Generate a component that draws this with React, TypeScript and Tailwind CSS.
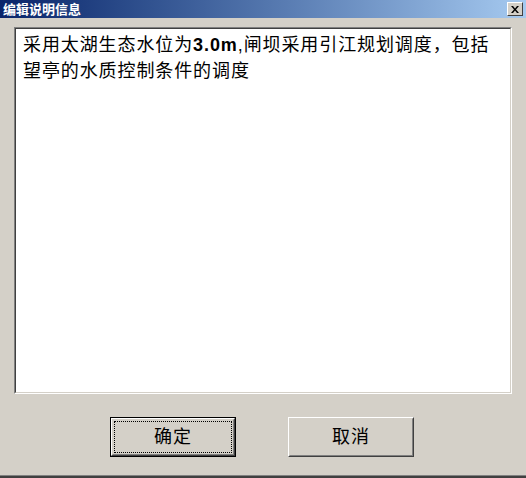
import React from 'react';

const cjk = { fontFamily: '"Liberation Sans", "Noto Sans CJK SC", sans-serif' };

const CloseButton: React.FC = () => (
  <div className="w-[16px] h-[14px] bg-[#d4d0c8] border border-t-white border-l-white border-r-[#404040] border-b-[#404040] flex items-center justify-center">
    <svg width="8" height="7" viewBox="0 0 8 7">
      <path d="M0 0h2l2 2.5L6 0h2L5 3.5 8 7H6L4 4.5 2 7H0l3-3.5z" fill="#000" />
    </svg>
  </div>
);

export default function App() {
  return (
    <div className="w-[526px] h-[478px] bg-[#d4d0c8] flex flex-col overflow-hidden select-none" style={cjk}>
      {/* title bar */}
      <div className="h-[18px] flex items-center justify-between pl-[3px] pr-[3px] bg-gradient-to-r from-[#0a246a] to-[#a6caf0]">
        <span className="text-[13px] font-bold text-white leading-none">编辑说明信息</span>
        <CloseButton />
      </div>

      {/* memo */}
      <div className="flex-1 flex flex-col">
        <div className="ml-[14px] mt-[9px] w-[498px] h-[367px] border border-t-[#808080] border-l-[#808080] border-r-white border-b-white">
          <div className="w-full h-full bg-white border border-t-[#404040] border-l-[#404040] border-r-[#d4d0c8] border-b-[#d4d0c8] pl-[7px] pt-[3px] text-[18px] leading-[26px] tracking-[0.9px] text-black whitespace-nowrap">
            采用太湖生态水位为<span className="font-semibold">3.0m</span>,闸坝采用引江规划调度，包括
            <br />
            望亭的水质控制条件的调度
          </div>
        </div>

        {/* buttons */}
        <div className="flex mt-[23px] ml-[110px] gap-[52px]">
          <div className="w-[126px] h-[40px] border border-black">
            <div className="w-full h-full border border-t-white border-l-white border-r-[#404040] border-b-[#404040]">
              <div className="w-full h-full border border-t-[#d4d0c8] border-l-[#d4d0c8] border-r-[#808080] border-b-[#808080] p-[1px]">
                <div className="w-full h-full border border-dotted border-black flex items-center justify-center text-[18px] text-black tracking-[1px]">
                  确定
                </div>
              </div>
            </div>
          </div>
          <div className="w-[126px] h-[40px] border border-t-white border-l-white border-r-[#404040] border-b-[#404040]">
            <div className="w-full h-full border border-t-[#d4d0c8] border-l-[#d4d0c8] border-r-[#808080] border-b-[#808080] flex items-center justify-center text-[18px] text-black tracking-[1px]">
              取消
            </div>
          </div>
        </div>
      </div>

      {/* window bottom frame */}
      <div className="h-[1px] bg-[#808080]" />
      <div className="h-[2px] bg-[#404040]" />
    </div>
  );
}
